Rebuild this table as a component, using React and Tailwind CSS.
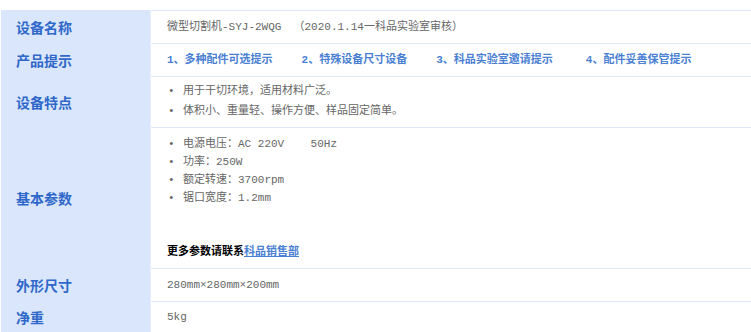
import React from 'react';

const rows = [
  { label: '设备名称', h: 'h-[32px]', first: true },
  { label: '产品提示', h: 'h-[32px]' },
  { label: '设备特点', h: 'h-[50px]' },
  { label: '基本参数', h: 'h-[140px]' },
  { label: '外形尺寸', h: 'h-[32px]' },
  { label: '净重', h: 'h-[31px]', last: true },
];

const tips = [
  { text: '1、多种配件可选提示', cls: '' },
  { text: '2、特殊设备尺寸设备', cls: 'ml-[29px]' },
  { text: '3、科品实验室邀请提示', cls: 'ml-[29px]' },
  { text: '4、配件妥善保管提示', cls: 'ml-[33px]' },
];

const Bullet = ({ children, lh }) => (
  <li className={`flex ${lh}`}>
    <span className="w-[16px] pl-[1px]">•</span>
    <span>{children}</span>
  </li>
);

const cellContent = (i) => {
  if (i === 0)
    return (
      <div className="flex h-full items-center whitespace-pre">
        微型切割机-SYJ-2WQG 　（2020.1.14一科品实验室审核）
      </div>
    );
  if (i === 1)
    return (
      <div className="flex h-full items-center font-bold text-[#4a7fd2]">
        {tips.map((t) => (
          <span key={t.text} className={t.cls}>{t.text}</span>
        ))}
      </div>
    );
  if (i === 2)
    return (
      <ul className="pt-[4px]">
        <Bullet lh="leading-[20px]">用于干切环境，适用材料广泛。</Bullet>
        <Bullet lh="leading-[20px]">体积小、重量轻、操作方便、样品固定简单。</Bullet>
      </ul>
    );
  if (i === 3)
    return (
      <div className="pt-[7px]">
        <ul>
          <Bullet lh="leading-[18px]">
            <span className="whitespace-pre">电源电压：AC 220V    50Hz</span>
          </Bullet>
          <Bullet lh="leading-[18px]">功率：250W</Bullet>
          <Bullet lh="leading-[18px]">额定转速：3700rpm</Bullet>
          <Bullet lh="leading-[18px]">锯口宽度：1.2mm</Bullet>
        </ul>
        <p className="mt-[36px] leading-[18px] font-bold text-black">
          更多参数请联系<a className="text-[#4a7fd2] underline">科品销售部</a>
        </p>
      </div>
    );
  if (i === 4)
    return <div className="flex h-full items-center">280mm×280mm×200mm</div>;
  return <div className="flex h-full items-center">5kg</div>;
};

export default function App() {
  return (
    <div className="h-[332px] w-[751px] overflow-hidden bg-white pt-[10px] pl-px">
      {rows.map((r, i) => (
        <div key={r.label} className="flex">
          <div className="flex w-[150px] items-center border-r border-dotted border-[#f2f6fe] bg-[#d9e6fc] pl-[15px] text-[14px] font-bold text-[#2f68c9] font-['Noto_Sans_CJK_SC',sans-serif]">
            {r.label}
          </div>
          <div
            className={`flex-1 pl-[16px] text-[11px] text-[#666] font-['Liberation_Mono','Noto_Sans_CJK_SC',monospace] border-[#dde8fb] ${
              r.first ? 'border-t' : ''
            } ${r.last ? '' : 'border-b'}`}
          >
            <div className={r.h}>{cellContent(i)}</div>
          </div>
        </div>
      ))}
    </div>
  );
}
